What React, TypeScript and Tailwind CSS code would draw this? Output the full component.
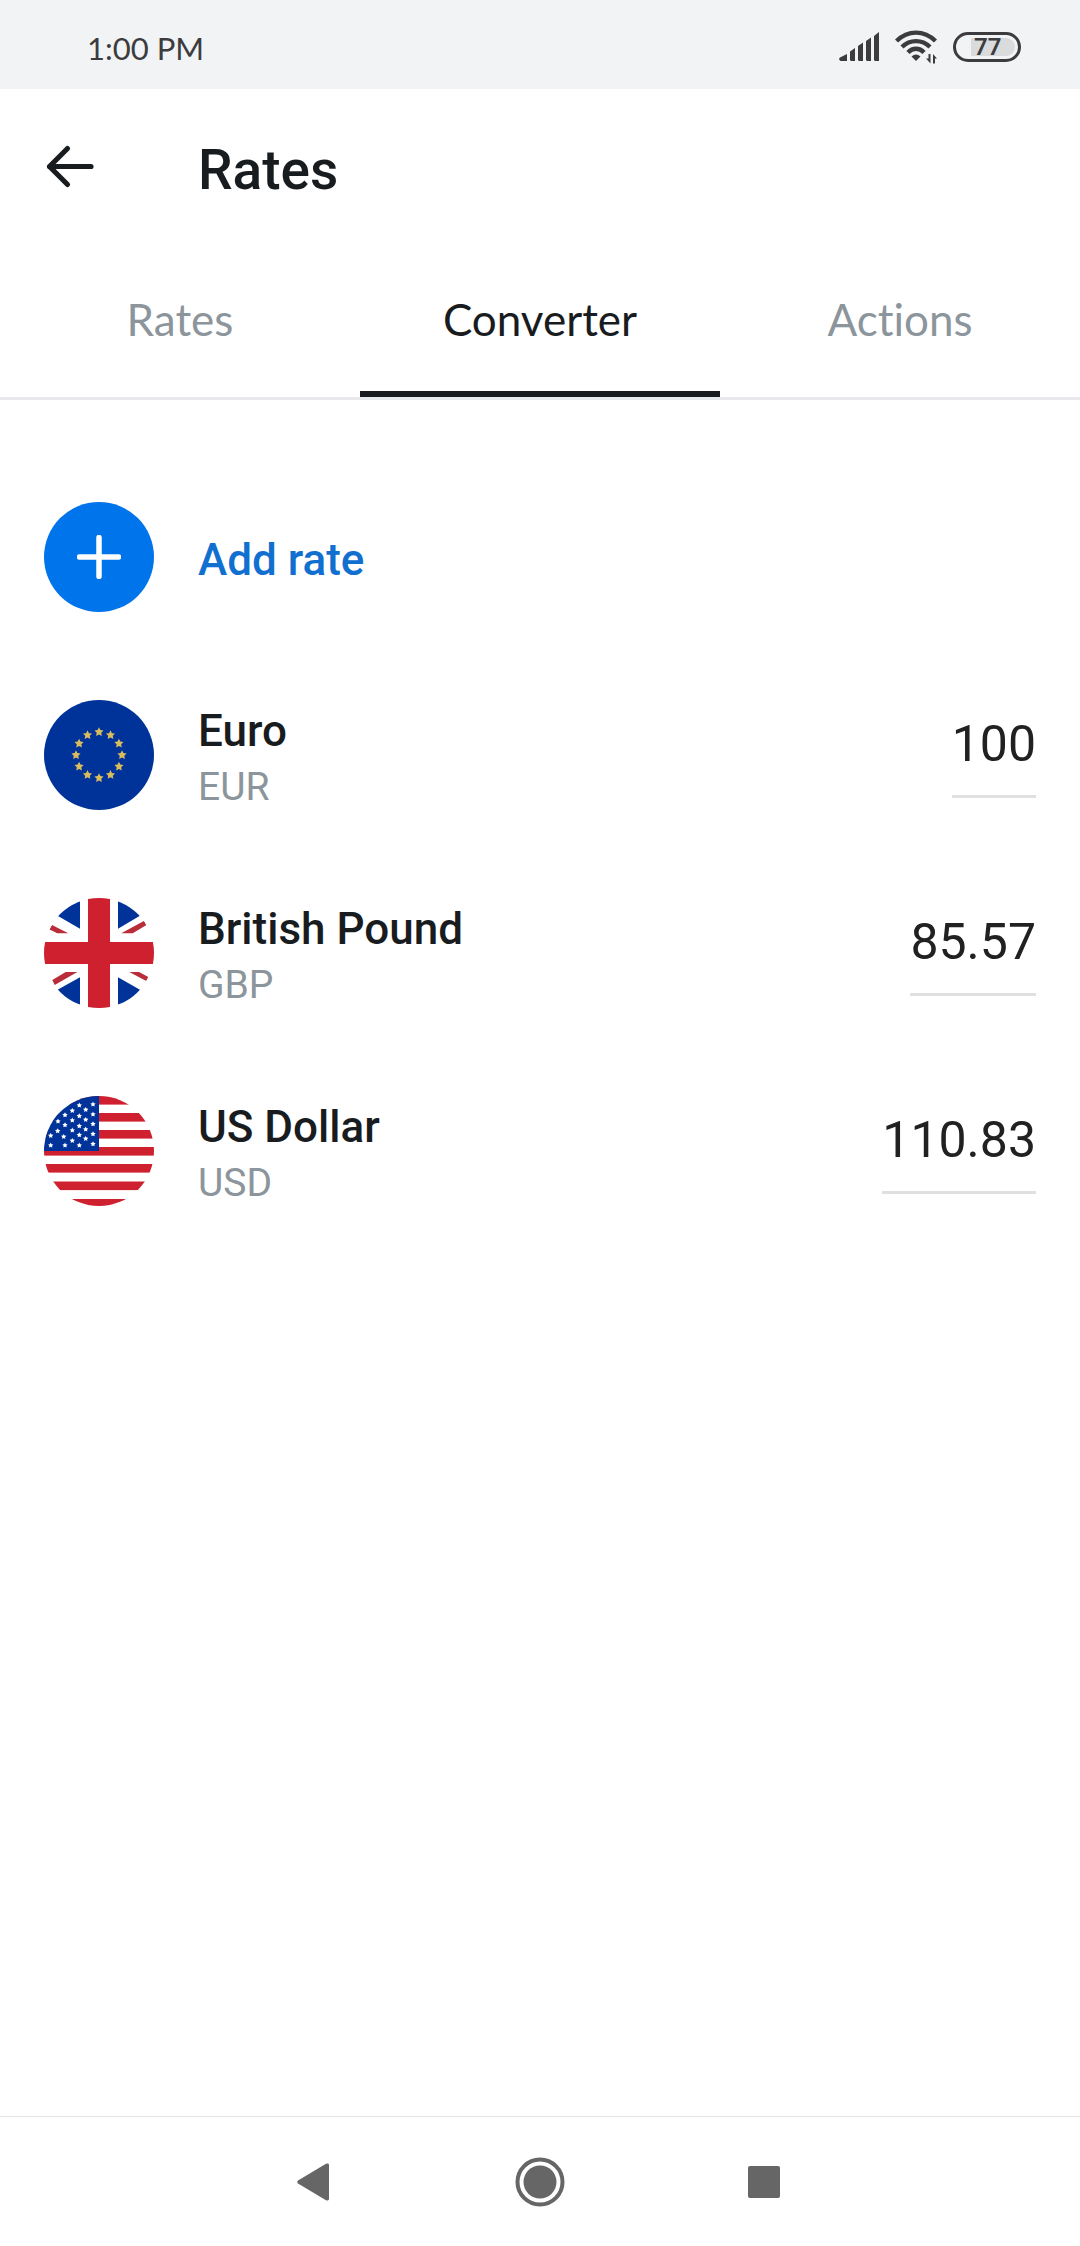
import React, { useState } from 'react';
import clsx from 'clsx';

type Currency = {
  code: string;
  name: string;
  flag: React.ReactNode;
};

const starPoints = (cx: number, cy: number, r: number) =>
  Array.from({ length: 10 }, (_, i) => {
    const radius = i % 2 === 0 ? r : r * 0.5;
    const angle = (Math.PI / 5) * i - Math.PI / 2;
    return `${(cx + radius * Math.cos(angle)).toFixed(2)},${(cy + radius * Math.sin(angle)).toFixed(2)}`;
  }).join(' ');

const EuFlag = () => (
  <svg viewBox="0 0 110 110" className="size-full" aria-hidden="true">
    <rect width="110" height="110" fill="#003399" />
    {Array.from({ length: 12 }, (_, i) => {
      const angle = (Math.PI / 6) * i;
      return (
        <polygon
          key={i}
          points={starPoints(55 + 23 * Math.sin(angle), 55 - 23 * Math.cos(angle), 4.8)}
          fill="#d9bc5e"
        />
      );
    })}
  </svg>
);

const UkFlag = () => (
  <svg viewBox="0 0 110 110" className="size-full" aria-hidden="true">
    <rect width="110" height="110" fill="#fff" />
    <g fill="#003399">
      <path d="M36 0V30.7L14 18L0 0Z" />
      <path d="M74 0V30.7L95.5 18L110 0Z" />
      <path d="M36 110V79.3L14 91.5L0 110Z" />
      <path d="M74 110V79.3L95.5 91.5L110 110Z" />
    </g>
    <g fill="#b92c3a">
      <path d="M8 27L24.3 35.3H13.3L5.5 31.5Z" />
      <path d="M77.3 35.3H88.7L102.5 27L100.3 22.7Z" />
      <path d="M21.7 74H33.3L10.7 87L8.3 82Z" />
      <path d="M85.3 74H95L104.3 79L102.3 83Z" />
    </g>
    <path d="M44 0H66V44H110V66H66V110H44V66H0V44H44Z" fill="#cf202f" />
  </svg>
);

const usStars = [
  [35.3, 9.3], [49, 8.3], [28.3, 14.7], [41.7, 13.7], [21, 19], [35.3, 20], [49, 18.3],
  [14, 25.3], [28.3, 24.3], [41.7, 23.7], [21, 29], [35.3, 30], [49, 28], [13.7, 35],
  [28.3, 34.3], [41.7, 33.3], [6.7, 39.7], [19.7, 40.7], [35.3, 39], [49, 38],
  [28.3, 44.7], [41.7, 42.7], [6.7, 49.3], [21, 49.3], [35.3, 49.3], [49, 48],
];

const UsFlag = () => (
  <svg viewBox="0 0 110 110" className="size-full" aria-hidden="true">
    <rect width="110" height="110" fill="#fff" />
    {[0, 17, 34, 51, 68, 85.5, 103].map((y) => (
      <rect key={y} y={y} width="110" height="8.6" fill="#cf202f" />
    ))}
    <rect width="55" height="55" fill="#003399" />
    {usStars.map(([x, y]) => (
      <polygon key={`${x}-${y}`} points={starPoints(x, y, 2.8)} fill="#fff" />
    ))}
  </svg>
);

const currencies: Currency[] = [
  { code: 'EUR', name: 'Euro', flag: <EuFlag /> },
  { code: 'GBP', name: 'British Pound', flag: <UkFlag /> },
  { code: 'USD', name: 'US Dollar', flag: <UsFlag /> },
];

const tabs = ['Rates', 'Converter', 'Actions'];

const StatusBar = () => (
  <div className="flex h-[89px] items-center justify-between bg-[#f2f3f5] pt-1 pr-[59px] pl-[87px] text-[#3c3c3e]">
    <span className="pt-0.5 font-[Lato,sans-serif] text-[31px] leading-10">1:00 PM</span>
    <div className="flex items-center gap-4">
      {/* Signal */}
      <svg width="40" height="30" viewBox="0 0 40 30" fill="currentColor" aria-hidden="true">
        <path d="M8 22V29H1.5Q-1 27 1 25.5Z" />
        <path d="M16 16V29H12.5Q11 29 11 27.5V19.5Z" />
        <path d="M24 10.5V29H20.5Q19 29 19 27.5V14Z" />
        <path d="M32 5.5V29H28.5Q27 29 27 27.5V9Z" />
        <path d="M40 0V29H36.5Q35 29 35 27.5V4Z" />
      </svg>
      {/* Wifi */}
      <svg width="42" height="34" viewBox="0 0 42 34" fill="none" aria-hidden="true">
        <g stroke="currentColor" strokeWidth="4.4">
          <path d="M1.5 11C13-.2 29-.2 40.5 11" />
          <path d="M7 17C15 9.2 27 9.2 35 17" />
          <path d="M13 22.5C17.5 17.5 24.5 17.5 29 22.5" />
        </g>
        <path d="M16.5 26.5Q21 22.5 25.5 26.5L21 31Z" fill="currentColor" />
        <path d="M35.5 24V33.5L31 28.5H33.5V24ZM38 33.5V24L42 28.5H40V33.5Z" fill="currentColor" />
      </svg>
      {/* Battery */}
      <div className="flex h-[30px] w-[68px] justify-end rounded-full border-3 border-[#3c3c3e] p-[3px]">
        <span className="w-[44px] rounded-r-full bg-[#dadbdd] pl-[3px] text-2xl leading-[18px] font-semibold">77</span>
      </div>
    </div>
  </div>
);

const NavigationBar = () => (
  <nav className="flex h-[130px] justify-center border-t border-[#e4e4e4] text-[#666]">
    <button aria-label="Back" className="flex w-[226px] items-center justify-center">
      <svg width="34" height="38" viewBox="0 0 34 38" fill="currentColor" aria-hidden="true">
        <path d="M1 17.5L29 .8Q32 0 32 2V36Q32 38 29 37.2L1 20.5Q-.5 19 1 17.5Z" />
      </svg>
    </button>
    <button aria-label="Home" className="flex w-[226px] items-center justify-center">
      <svg width="50" height="50" viewBox="0 0 50 50" aria-hidden="true">
        <circle cx="25" cy="25" r="22.5" fill="none" stroke="currentColor" strokeWidth="4" />
        <circle cx="25" cy="25" r="16.5" fill="currentColor" />
      </svg>
    </button>
    <button aria-label="Recent apps" className="flex w-[226px] items-center justify-center">
      <svg width="36" height="32" viewBox="0 0 36 32" fill="currentColor" aria-hidden="true">
        <rect width="32" height="32" rx="2" />
      </svg>
    </button>
  </nav>
);

export default function App() {
  const [activeTab, setActiveTab] = useState('Converter');
  const [amounts, setAmounts] = useState<Record<string, string>>({
    EUR: '100',
    GBP: '85.57',
    USD: '110.83',
  });

  return (
    <div className="flex min-h-screen flex-col bg-white font-[Roboto,sans-serif] text-[#191c1f]">
      <StatusBar />

      {/* Header */}
      <header className="flex h-[161px] items-center px-11">
        <button aria-label="Go back" className="w-[154px]">
          <svg width="52" height="52" viewBox="0 0 52 52" fill="none" aria-hidden="true">
            <path
              d="M47 22.5H5.5M23.5 4.5L5.5 22.5L23.5 40.5"
              stroke="currentColor"
              strokeWidth="5.2"
              strokeLinecap="round"
              strokeLinejoin="round"
            />
          </svg>
        </button>
        <h1 className="text-[55px] leading-16 font-medium">Rates</h1>
      </header>

      {/* Tabs */}
      <div role="tablist" className="grid grid-cols-3 border-b-3 border-[#e7e9ec]">
        {tabs.map((tab) => (
          <button
            key={tab}
            role="tab"
            aria-selected={tab === activeTab}
            onClick={() => setActiveTab(tab)}
            className={clsx(
              'h-[147px] border-b-6 pb-1 font-[Lato,sans-serif] text-[44px] leading-14 [font-variant-ligatures:none]',
              tab === activeTab ? 'border-[#191c1f]' : 'border-transparent text-[#8b959b]'
            )}
          >
            {tab}
          </button>
        ))}
      </div>

      {/* Converter */}
      <main className="flex-1 px-11 pt-[58px]">
        <button className="flex h-[198px] w-full items-center gap-11 text-left">
          <span className="flex size-[110px] items-center justify-center rounded-full bg-[#0075eb]">
            <svg width="44" height="44" viewBox="0 0 44 44" fill="none" aria-hidden="true">
              <path d="M22 2.5V41.5M2.5 22H41.5" stroke="#fff" strokeWidth="5.5" strokeLinecap="round" />
            </svg>
          </span>
          <span className="pt-1.5 text-[44px] leading-14 font-medium text-[#1170cf]">Add rate</span>
        </button>

        <ul>
          {currencies.map(({ code, name, flag }) => (
            <li key={code} className="flex h-[198px] items-center gap-11">
              <div className="size-[110px] overflow-hidden rounded-full">{flag}</div>
              <label htmlFor={code} className="flex flex-1 flex-col pt-2">
                <span className="text-[44px] leading-14 font-medium">{name}</span>
                <span className="text-[39px] leading-14 text-[#8b959b]">{code}</span>
              </label>
              <input
                id={code}
                type="text"
                inputMode="decimal"
                value={amounts[code]}
                onChange={(e) => setAmounts({ ...amounts, [code]: e.target.value })}
                className="field-sizing-content border-b-3 border-[#e0e0e0] pb-[19px] text-right text-[50px] leading-16 text-[#212121] outline-none"
              />
            </li>
          ))}
        </ul>
      </main>

      <NavigationBar />
    </div>
  );
}
